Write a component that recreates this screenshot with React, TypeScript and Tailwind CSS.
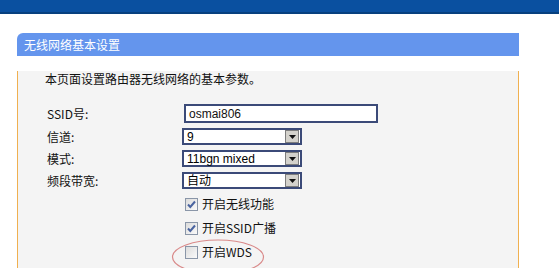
import React from 'react'

// Router admin page — wireless basic settings panel

const cjk = "font-['Noto_Sans_CJK_SC',sans-serif]"
const arial = "font-['Liberation_Sans','Noto_Sans_CJK_SC',sans-serif]"

function Select({ value }: { value: string }) {
  return (
    <div className="flex h-[17px] w-[120px] items-center border-2 border-[#3b4a78] bg-white">
      <span className={`flex-1 pl-[3px] text-[12px] leading-none text-black ${arial}`}>{value}</span>
      <span className="mr-[1px] flex h-[13px] w-[14px] items-center justify-center border border-[#7d7d7d] bg-[#d4d2cc]">
        <svg width="7" height="4" viewBox="0 0 7 4">
          <path d="M0 0h7L3.5 4z" fill="#111" />
        </svg>
      </span>
    </div>
  )
}

function Checkbox({ checked }: { checked: boolean }) {
  return (
    <span className="flex h-[13px] w-[13px] items-center justify-center border border-[#8a96a8] bg-gradient-to-br from-[#dcdcdc] to-[#fafafa]">
      {checked && (
        <svg width="9" height="9" viewBox="0 0 9 9">
          <path d="M1 4.5l2.3 2.5L8 1.5" fill="none" stroke="#4a64a0" strokeWidth="2" />
        </svg>
      )}
    </span>
  )
}

const fields = [
  { label: 'SSID号:', kind: 'input', value: 'osmai806' },
  { label: '信道:', kind: 'select', value: '9' },
  { label: '模式:', kind: 'select', value: '11bgn mixed' },
  { label: '频段带宽:', kind: 'select', value: '自动' }
]

const toggles = [
  { label: '开启无线功能', checked: true },
  { label: '开启SSID广播', checked: true },
  { label: '开启WDS', checked: false }
]

export default function App() {
  return (
    <div className={`relative h-[268px] w-[559px] overflow-hidden bg-white ${cjk}`}>
      <div className="h-[14px] border-b-2 border-[#07407e] bg-[#0a50a0]" />

      <div className="ml-[17px] mt-[19px] w-[502px]">
        <div className="flex h-[23px] items-center rounded-tl-[6px] bg-[#6495ed] pl-[7px] text-[12px] text-white">
          无线网络基本设置
        </div>

        <div className="h-[220px] border-x border-[#f0b050] bg-[#f4f4f4] pl-[27px] text-[12px] text-[#111]">
          <p className="mt-[15px] h-[16px] leading-[16px]">本页面设置路由器无线网络的基本参数。</p>

          <div className="mt-[17px] flex flex-col gap-[5px] pl-[2px]">
            {fields.map((f) => (
              <div key={f.label} className="flex items-center">
                <span className="w-[135px] leading-none">{f.label}</span>
                {f.kind === 'input' ? (
                  <div className="ml-[2px] flex h-[19px] w-[194px] items-center border-2 border-[#3b4a78] bg-white pl-[3px]">
                    <span className={`text-[12px] leading-none ${arial}`}>{f.value}</span>
                  </div>
                ) : (
                  <Select value={f.value} />
                )}
              </div>
            ))}
          </div>

          <div className="mt-[3px] flex flex-col pl-[140px]">
            {toggles.map((t) => (
              <div key={t.label} className="flex h-[24px] items-center gap-[4px]">
                <Checkbox checked={t.checked} />
                <span className="leading-none">{t.label}</span>
              </div>
            ))}
          </div>
        </div>
      </div>

      {/* hand-drawn highlight around the WDS option */}
      <svg className="absolute left-[170px] top-[237px]" width="96" height="42" viewBox="0 0 96 42">
        <ellipse cx="48" cy="20" rx="45.5" ry="17" fill="none" stroke="#d98a8a" strokeWidth="1.2" />
      </svg>
    </div>
  )
}
